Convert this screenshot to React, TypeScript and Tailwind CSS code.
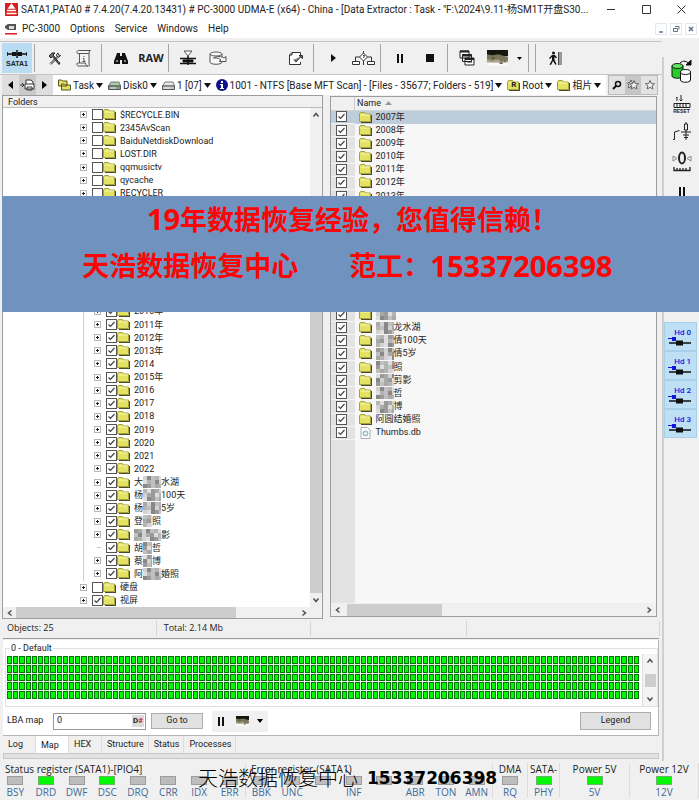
import type { ReactNode } from "react";
import { clsx } from "clsx";

const wide = "font-['Open_Sans','Noto_Sans_CJK_SC',sans-serif]";
const narrow = "font-['Roboto','Noto_Sans_CJK_SC',sans-serif]";

/* ---------- data ---------- */

interface Entry {
  name: string;
  level?: 1 | 2;
  checked?: boolean;
  leaf?: boolean;
  file?: boolean;
  // width of the pixelated part and the text that follows it
  mask?: number;
  tail?: string;
}

const hidden = (count: number, level: 1 | 2): Entry[] =>
  Array.from({ length: count }, () => ({ name: "", level, checked: true }));

const tree: Entry[] = [
  { name: "$RECYCLE.BIN", level: 1 },
  { name: "2345AvScan", level: 1 },
  { name: "BaiduNetdiskDownload", level: 1 },
  { name: "LOST.DIR", level: 1 },
  { name: "qqmusictv", level: 1 },
  { name: "qycache", level: 1 },
  { name: "RECYCLER", level: 1 },
  ...hidden(5, 1),
  ...hidden(3, 2),
  ...[
    "2010年",
    "2011年",
    "2012年",
    "2013年",
    "2014",
    "2015年",
    "2016",
    "2017",
    "2018",
    "2019",
    "2020",
    "2021",
    "2022",
  ].map((name): Entry => ({ name, level: 2, checked: true })),
  { name: "大", level: 2, checked: true, mask: 18, tail: "水湖" },
  { name: "杨", level: 2, checked: true, mask: 18, tail: "100天" },
  { name: "杨", level: 2, checked: true, mask: 18, tail: "5岁" },
  { name: "登", level: 2, checked: true, mask: 9, tail: "照" },
  { name: "", level: 2, checked: true, mask: 27, tail: "影" },
  { name: "胡", level: 2, checked: true, leaf: true, mask: 9, tail: "哲" },
  { name: "蔡", level: 2, checked: true, mask: 9, tail: "博" },
  { name: "阿", level: 2, checked: true, mask: 18, tail: "婚照" },
  { name: "硬盘", level: 1 },
  { name: "视屏", level: 1, checked: true },
];

const files: Entry[] = [
  { name: "2007年" },
  { name: "2008年" },
  { name: "2009年" },
  { name: "2010年" },
  { name: "2011年" },
  { name: "2012年" },
  { name: "2013年" },
  ...hidden(8, 1),
  { name: "", mask: 20 },
  { name: "", mask: 18, tail: "龙水湖" },
  { name: "", mask: 18, tail: "倩100天" },
  { name: "", mask: 18, tail: "倩5岁" },
  { name: "", mask: 18, tail: "照" },
  { name: "", mask: 18, tail: "剪影" },
  { name: "", mask: 18, tail: "哲" },
  { name: "", mask: 18, tail: "博" },
  { name: "阿圆结婚照" },
  { name: "Thumbs.db", file: true },
];

const registers = [
  {
    title: "Status register (SATA1)-[PIO4]",
    leds: ["BSY", "DRD", "DWF", "DSC", "DRQ", "CRR", "IDX", "ERR"],
    on: ["DRD", "DSC"],
  },
  {
    title: "Error register-(SATA1)",
    leds: ["BBK", "UNC", "", "INF", "", "ABR", "TON", "AMN"],
    on: [],
  },
  { title: "DMA", leds: ["RQ"], on: [] },
  { title: "SATA-", leds: ["PHY"], on: ["PHY"] },
  { title: "Power 5V", leds: ["5V"], on: ["5V"] },
  { title: "Power 12V", leds: ["12V"], on: ["12V"] },
];

/* ---------- small drawings ---------- */

function Folder() {
  return (
    <svg width="13" height="11" viewBox="0 0 13 11" className="shrink-0">
      <path d="M2 11h11V3h-1v7H2z" fill="#4a4a26" />
      <path d="M.5 9.500V2l1-1.500h4L6.500 2h5v7.500z" fill="#e4e262" stroke="#a3a23c" />
      <path d="M1.500 3h9" stroke="#f8f7b4" />
    </svg>
  );
}

function FileIcon() {
  return (
    <svg width="11" height="12" viewBox="0 0 11 12" className="shrink-0">
      <path d="M1 .5h6.500L10 3v8.500H1z" fill="#fff" stroke="#a8adb2" />
      <circle cx="5.500" cy="6.500" r="2.500" fill="#c5dce4" stroke="#8ba9b5" />
      <circle cx="5.500" cy="6.500" r="1" fill="#fff" />
    </svg>
  );
}

function Mosaic({ width, seed }: { width: number; seed: number }) {
  const tones = ["#d2d2d2", "#9a9a9a", "#b4b4b4", "#888888", "#a9a9a9", "#dedede", "#c0c0c0"];
  const cols = Math.ceil(width / 4);
  return (
    <svg width={width} height="12" viewBox={`0 0 ${width} 12`} className="shrink-0">
      {Array.from({ length: cols * 3 }, (_, i) => {
        const col = i % cols;
        const row = Math.floor(i / cols);
        return (
          <rect
            key={i}
            x={col * 4}
            y={row * 4}
            width="4"
            height="4"
            fill={tones[(col * 3 + row * 5 + col * row + seed * 2) % tones.length]}
          />
        );
      })}
    </svg>
  );
}

function Expander() {
  return (
    <svg width="7" height="7" viewBox="0 0 7 7" className="shrink-0">
      <rect x=".5" y=".5" width="6" height="6" fill="#fff" stroke="#b5b5b5" />
      <path d="M2 3.500h3M3.500 2v3" stroke="#222" />
    </svg>
  );
}

function Caret() {
  return (
    <svg width="7" height="5" viewBox="0 0 7 5" className="shrink-0">
      <path d="M0 0h7L3.500 5z" fill="#111" />
    </svg>
  );
}

function Arrow({ dir }: { dir: "up" | "down" | "left" | "right" }) {
  const paths = {
    up: "M1.500 5.500 4 2.500l2.500 3",
    down: "M1.500 2.500 4 5.500l2.500-3",
    left: "M5.500 1.500 2.500 4l3 2.500",
    right: "M2.500 1.500 5.500 4l-3 2.500",
  };
  return (
    <svg width="8" height="8" viewBox="0 0 8 8" className="shrink-0">
      <path d={paths[dir]} fill="none" stroke="#505050" strokeWidth="1.500" />
    </svg>
  );
}

function Check({ id, label, checked }: { id: string; label: string; checked?: boolean }) {
  return (
    <span className="grid shrink-0">
      <input
        id={id}
        type="checkbox"
        aria-label={label || "Folder"}
        defaultChecked={checked}
        className="peer col-start-1 row-start-1 size-[11px] appearance-none border border-[#555] bg-white"
      />
      <svg
        viewBox="0 0 11 11"
        className="pointer-events-none invisible col-start-1 row-start-1 size-[11px] peer-checked:visible"
      >
        <path d="M2.500 5.500 4.500 7.500 8.500 3" fill="none" stroke="#444" strokeWidth="1.200" />
      </svg>
    </span>
  );
}

function Pause() {
  return (
    <svg width="8" height="9" viewBox="0 0 8 9">
      <path d="M1 0h2v9H1zM5 0h2v9H5z" fill="#111" />
    </svg>
  );
}

function Landscape({ width }: { width: number }) {
  return (
    <svg width={width} height={width * 0.75} viewBox="0 0 20 15">
      <path d="M0 0h20v6H0z" fill="#15150f" />
      <path d="M0 4l5 1 6-1 9 3v5H0z" fill="#77745a" />
      <path d="M0 9h3v1h4v-1h5v2h3v-1h5v3H0z" fill="#aaa68a" />
      <path d="M0 12h20v3H0z" fill="#fafaf8" />
      <path d="M12 12h3v1h-3zM16 10h2v1h-2zM5 7h2v1H5z" fill="#3f3e30" />
    </svg>
  );
}

/* ---------- toolbar ---------- */

function Tool({ label, children }: { label: string; children: ReactNode }) {
  return (
    <button aria-label={label} className="flex h-[30px] w-[30px] shrink-0 items-center justify-center">
      {children}
    </button>
  );
}

function Sep() {
  return <div className="mx-[2px] h-[28px] w-[3px] shrink-0 border-l border-[#a5a5a5]" />;
}

function Toolbar() {
  return (
    <div className="flex items-center border-y border-[#c4c4c4] py-px pl-[2px]">
      <button className="flex h-[30px] w-[30px] shrink-0 flex-col items-center justify-center bg-[#b9dcf3]">
        <svg width="20" height="10" viewBox="0 0 20 10">
          <path d="M0 5h20M0 3v4M20 3v4" stroke="#111" strokeWidth="1.500" />
          <path d="M5 3h4v4H5zM11 3h4v4h-4z" fill="#111" />
          <path d="M10 1v8" stroke="#111" strokeWidth="1.500" />
        </svg>
        <span className="font-['Liberation_Sans',sans-serif] text-[7px] leading-[9px] font-bold">SATA1</span>
      </button>
      <Sep />
      <Tool label="Tools">
        <svg width="13" height="13" viewBox="0 0 13 13" fill="none" stroke="#222">
          <path d="M2 11.500 9 4.500M3 12.500l7-7" />
          <path d="M1 4l3-3h3L5 3l6 7.500 1 .5-1 1.500-6.500-8L3 6z" fill="#777" />
          <path d="M9 4.500 8.500 2.500 10 1l.3 2 2.200.4-1.500 1.800z" fill="#fff" />
        </svg>
      </Tool>
      <Tool label="Script">
        <svg width="18" height="18" viewBox="0 0 18 18" fill="#f5f5f5" stroke="#555">
          <path d="M4.500 14V4.500H14V14c0 2.500 1.500 3-.5 3H3.500c-2 0-2-3-1-3h8c0 2 1 3 2.500 3" />
          <path d="M14 4.500H3c-1.500 0-1.500-3 .5-3h12c-1.500 0-1.500 3-1.500 3z" />
          <path d="M9 7v1M8 9.500h1V12M7.500 12.500h3" fill="none" />
        </svg>
      </Tool>
      <Sep />
      <Tool label="Find">
        <svg width="14" height="13" viewBox="0 0 14 13" fill="#111">
          <path d="M3 1h3v3h2V1h3l1 3 2 5v3H8V8H6v4H0V9l2-5z" />
          <path d="M2 9h2M10 9h2" stroke="#fff" />
        </svg>
      </Tool>
      <Tool label="RAW">
        <span className="font-['Open_Sans',sans-serif] text-[11px] font-bold">RAW</span>
      </Tool>
      <Sep />
      <Tool label="Filter">
        <svg width="18" height="16" viewBox="0 0 18 16" fill="none" stroke="#111">
          <path d="M5 1h8L9 6z" fill="#fff" stroke="#555" />
          <path d="M9 6v9M1 8.500h16M1 13.500h16" strokeWidth="1.500" />
          <path d="M4 10h10v2H4z" fill="#111" />
        </svg>
      </Tool>
      <Tool label="Disk">
        <svg width="18" height="15" viewBox="0 0 18 15" fill="#f8f8f8" stroke="#555">
          <path d="M1 3v8c0 3 12 3 12 0V3" />
          <ellipse cx="7" cy="3" rx="6" ry="2" />
          <path d="M4.500 7c4-.5 6 .5 7.500 2l-2 1.500h7V5.500L15 7c-3-2-7-2-10.500 0z" />
        </svg>
      </Tool>
      <div className="w-[48px] shrink-0" />
      <Tool label="Export">
        <svg width="16" height="15" viewBox="0 0 16 15" fill="#fff" stroke="#333">
          <path d="M12.500 4V1.500H4L1.500 4v9.500h11V11M4 1.500V4H1.500" />
          <path d="M6 8.500 8 11l5-5.500M11 4.500h3.500v3z" fill="#888" />
        </svg>
      </Tool>
      <Sep />
      <Tool label="Start">
        <svg width="6" height="8" viewBox="0 0 6 8">
          <path d="M1 0l5 4-5 4z" fill="#111" />
        </svg>
      </Tool>
      <Tool label="Scheme">
        <svg width="23" height="15" viewBox="0 0 23 15" fill="#fff" stroke="#333">
          <path d="M11.500 0v2M3.500 11V6h4M19.500 11V6h-4M11.500 10v4" fill="none" />
          <path d="M11.500 2l4 4-4 4-4-4z" />
          <path d="M11 4.500h1.500L11.500 7" fill="none" />
          <path d="M.5 10.500h7v3h-7zM15.500 10.500h7v3h-7z" />
        </svg>
      </Tool>
      <Sep />
      <Tool label="Pause">
        <Pause />
      </Tool>
      <Tool label="Stop">
        <span className="size-2 bg-[#111]" />
      </Tool>
      <Sep />
      <Tool label="Windows">
        <svg width="16" height="16" viewBox="0 0 16 16" fill="#fff" stroke="#222">
          <path d="M1 1h9v7H1zM3.500 4.500h9v7h-9zM6 8h9v7H6z" />
          <path d="M1 1.500h9M3.500 5.500h9M6 9h9" strokeWidth="2" />
          <path d="M8 12h5" />
        </svg>
      </Tool>
      <Tool label="Map view">
        <Landscape width={21} />
      </Tool>
      <button aria-label="More views" className="flex h-[30px] w-[14px] shrink-0 items-center justify-center">
        <svg width="5" height="3" viewBox="0 0 5 3">
          <path d="M0 0h5L2.500 3z" />
        </svg>
      </button>
      <Sep />
      <Sep />
      <Tool label="Exit">
        <svg width="15" height="15" viewBox="0 0 15 15" fill="#111">
          <circle cx="5.500" cy="2" r="1.500" />
          <path d="M4 4h3l2 2.500-1 .8L6.500 6v3l2 4-1 1L5 10l-2 4-1.500-.5L4 9V6L2 8 1 7z" />
          <path d="M10 1h1v13h-1z" fill="#444" />
          <path d="M11 1h3v13h-3z" fill="#999" />
        </svg>
      </Tool>
    </div>
  );
}

function Crumb({ icon, text }: { icon: ReactNode; text: string }) {
  return (
    <button className="flex shrink-0 items-center gap-[2px] whitespace-nowrap">
      {icon}
      <span>{text}</span>
      <Caret />
    </button>
  );
}

function DiskIcon({ green }: { green?: boolean }) {
  return (
    <svg width="13" height="11" viewBox="0 0 13 11">
      <path d="M3 2h8l1.500 4H.5z" fill={green ? "#a9c9a9" : "#e8e8e8"} stroke="#777" />
      <path d="M.5 6h12v3.500H.5z" fill={green ? "#7ba47b" : "#c8c8c8"} stroke="#555" />
      <path d="M2 8h6" stroke="#eee" />
    </svg>
  );
}

function PathBar() {
  return (
    <nav className={clsx(narrow, "flex h-[20px] items-center text-[10px]")}>
      <div className="ml-[2px] flex h-[20px] w-[51px] shrink-0 items-center bg-[#dedede]">
        <button aria-label="Back" className="flex flex-1 justify-center">
          <svg width="5" height="8" viewBox="0 0 5 8">
            <path d="M5 0v8L0 4z" />
          </svg>
        </button>
        <button aria-label="Go to item" className="flex h-full flex-1 items-center justify-center bg-[#c9c9c9]">
          <svg width="15" height="12" viewBox="0 0 15 12" fill="#fff" stroke="#333">
            <path d="M0 6h3M2 4l2 2-2 2" fill="none" />
            <path d="M6 5V1h5l2 2v2M5 5h9v5H5zM7 11V8h5v3z" />
          </svg>
        </button>
        <button aria-label="Forward" className="flex flex-1 justify-center">
          <svg width="5" height="8" viewBox="0 0 5 8">
            <path d="M0 0v8l5-4z" />
          </svg>
        </button>
      </div>
      <div className="flex h-[20px] min-w-0 flex-1 items-center gap-[5px] overflow-hidden bg-white pl-[5px]">
        <Crumb
          icon={
            <svg width="13" height="12" viewBox="0 0 13 12" fill="#e4e262" stroke="#55551c">
              <path d="M.5 7V1h3l1 1H9v5zM3.500 11V5h3l1 1h5v5z" />
            </svg>
          }
          text="Task"
        />
        <Crumb icon={<DiskIcon green />} text="Disk0" />
        <Crumb icon={<DiskIcon />} text="1 [07]" />
        <Crumb
          icon={
            <svg width="12" height="12" viewBox="0 0 12 12">
              <circle cx="6" cy="6" r="6" fill="#10108c" />
              <path d="M5 2h2v2H5zM4 5h3v4h1v1H4V9h1V6H4z" fill="#fff" />
            </svg>
          }
          text="1001 - NTFS [Base MFT Scan] - [Files - 35677; Folders - 519]"
        />
        <Crumb
          icon={
            <span className="grid place-items-center">
              <span className="col-start-1 row-start-1">
                <Folder />
              </span>
              <span className="col-start-1 row-start-1 text-[8px] leading-none font-bold">R</span>
            </span>
          }
          text="Root"
        />
        <Crumb icon={<Folder />} text="相片" />
      </div>
      <div className="mr-1 ml-[2px] flex shrink-0 border border-[#bbb]">
        <button aria-label="Search" className="flex h-[18px] w-4 items-center justify-center bg-[#e2e2e2]">
          <svg width="10" height="10" viewBox="0 0 10 10" fill="none" stroke="#111">
            <circle cx="6" cy="4" r="2.500" strokeWidth="1.500" />
            <path d="M4 6 1 9" strokeWidth="2" />
          </svg>
        </button>
        {["#c6c6c6", "#e2e2e2"].map((tone, i) => (
          <button
            key={tone}
            aria-label={i ? "Bookmark" : "Bookmarks"}
            className="flex h-[18px] w-4 items-center justify-center"
            style={{ backgroundColor: tone }}
          >
            <svg width="13" height="12" viewBox="0 0 13 12" fill="#eee" stroke="#666">
              {i === 0 && <path d="M4 1l1 2.500 3 .3-2 2 .5 3L4 7.500 1.500 9 2 6 .5 4 3 3.500z" />}
              <path d="M7 1.500l1.300 3 3.200.3-2.400 2.100.8 3.100L7 8.400 4.100 10l.8-3.100-2.400-2.100 3.200-.3z" />
            </svg>
          </button>
        ))}
      </div>
    </nav>
  );
}

/* ---------- panes ---------- */

function EntryName({ entry, seed }: { entry: Entry; seed: number }) {
  return (
    <span className="flex items-center whitespace-nowrap">
      {entry.name}
      {entry.mask && <Mosaic width={entry.mask} seed={seed} />}
      {entry.tail}
    </span>
  );
}

function FolderPane() {
  return (
    <section className="flex min-w-0 flex-[320] flex-col border border-[#9d9d9d] bg-white">
      <h2 className="h-[12px] border-b border-[#bdbdbd] bg-[#f0f0f0] pl-[5px] leading-[12px]">Folders</h2>
      <div className="flex flex-1">
        <ul className="flex flex-1 flex-col pl-[77px] leading-[12px]">
          {tree.map((entry, i) => (
            <li
              key={i}
              className={clsx(
                "flex flex-1 items-center",
                entry.level === 2 && "ml-[3px] border-l border-[#cfcfcf] pl-[10px]",
              )}
            >
              {entry.leaf ? <span className="ml-[3px] w-1 border-t border-[#ccc]" /> : <Expander />}
              <span className="w-[5px]" />
              <Check id={`tree-${i}`} label={entry.name} checked={entry.checked} />
              <label htmlFor={`tree-${i}`} className="flex items-center gap-[4px]">
                <Folder />
                <EntryName entry={entry} seed={i} />
              </label>
            </li>
          ))}
        </ul>
        <div className="flex w-[12px] flex-col items-center bg-[#f0f0f0] py-[3px]">
          <Arrow dir="up" />
          <div className="mt-[77px] mb-[3px] w-full flex-1 bg-[#cdcdcd]" />
          <Arrow dir="down" />
        </div>
      </div>
      <div className="flex h-[11px] items-center bg-[#f0f0f0] pr-[14px] pl-[3px]">
        <Arrow dir="left" />
        <div className="ml-[2px] h-full w-[73%] bg-[#cdcdcd]" />
        <span className="flex-1" />
        <Arrow dir="right" />
      </div>
    </section>
  );
}

function FilePane() {
  return (
    <section className="mt-px mb-[2px] flex min-w-0 flex-[327] flex-col border border-[#9d9d9d] bg-[#f7f7f7]">
      <table className="h-[343px] w-full border-collapse">
        <thead>
          <tr className="h-[13px] border-b border-[#d5d5d5] bg-[#f0f0f0]">
            <th className="w-[24px] border-r border-[#ccc]" aria-label="Selected" />
            <th className="p-0 pl-[2px] text-left leading-[12px] font-normal">
              <span className="flex items-center gap-1">
                Name
                <svg width="7" height="4" viewBox="0 0 7 4">
                  <path d="M0 4h7L3.500 0z" fill="#999" />
                </svg>
              </span>
            </th>
          </tr>
        </thead>
        <tbody>
          {files.map((entry, i) => (
            <tr key={i} className={clsx(i === 0 && "bg-[#becddb]")}>
              <td className={clsx("border-b border-[#f4f4f4] p-0 pl-[5px]", i > 0 && "bg-[#e3e3e3]")}>
                <Check id={`file-${i}`} label={entry.name} checked />
              </td>
              <td className="p-0 pl-[4px]">
                <label htmlFor={`file-${i}`} className="flex h-[13px] items-center gap-[4px] leading-[13px]">
                  <span className="flex w-[13px] justify-center">{entry.file ? <FileIcon /> : <Folder />}</span>
                  <EntryName entry={entry} seed={i} />
                </label>
              </td>
            </tr>
          ))}
        </tbody>
      </table>
      <div className="w-[24px] flex-1 bg-[#e3e3e3]" />
      <div className="flex h-[13px] items-center bg-[#f0f0f0] px-[3px]">
        <Arrow dir="left" />
        <div className="ml-[5px] h-[12px] w-[30%] bg-[#cdcdcd]" />
        <span className="flex-1" />
        <Arrow dir="right" />
      </div>
    </section>
  );
}

function MapPanel() {
  return (
    <section className={clsx(narrow, "mx-[3px] border-t border-[#9a9a9a] pt-px text-[9px]")}>
      <div className="border-r border-b border-[#b5b5b5] bg-white pt-[3px]">
        <fieldset className="ml-[2px] border border-[#e0e0e0]">
          <legend className="ml-[4px] px-px leading-[11px]">0 - Default</legend>
          <div className="flex">
            <div className="mt-[2px] mr-[3px] mb-[7px] ml-px grid h-[43px] min-w-0 flex-1 grid-cols-[repeat(102,minmax(0,1fr))] grid-rows-5 gap-px bg-[#dff5df]">
              {Array.from({ length: 510 }, (_, i) => (
                <span key={i} className="border border-[#087308] bg-[#00fb00]" />
              ))}
            </div>
            <div className="flex w-[15px] flex-col items-center border-l border-[#ddd] bg-[#f4f4f4] py-[3px]">
              <Arrow dir="up" />
              <div className="my-auto h-[13px] w-[11px] bg-[#cdcdcd]" />
              <Arrow dir="down" />
            </div>
          </div>
        </fieldset>
        <div className="flex h-[28px] items-center pl-[4px]">
          <label htmlFor="lba" className="w-[46px]">
            LBA map
          </label>
          <div className="flex h-[17px] w-[93px] items-center border border-[#999] bg-white">
            <input id="lba" defaultValue="0" className="min-w-0 flex-1 pl-[3px] outline-none" />
            <button className="mr-px h-[12px] bg-[#dcdcdc] px-px text-[8px] leading-[12px] font-bold">
              D<span className="text-[#d02020]">#</span>
            </button>
          </div>
          <button className="ml-[5px] h-[16px] w-[52px] border border-[#adadad] bg-[#e1e1e1]">Go to</button>
          <div className="ml-[9px] flex h-[21px] items-center gap-[11px] bg-[#f0f0f0] px-[5px]">
            <button aria-label="Pause map">
              <Pause />
            </button>
            <button aria-label="Map colours">
              <Landscape width={13} />
            </button>
            <button aria-label="Map menu" className="-ml-[3px]">
              <svg width="6" height="4" viewBox="0 0 6 4">
                <path d="M0 0h6L3 4z" />
              </svg>
            </button>
          </div>
          <button className="mr-[7px] ml-auto h-[18px] w-[71px] border border-[#adadad] bg-[#e1e1e1]">Legend</button>
        </div>
      </div>
      <div className="flex h-[17px]" role="tablist">
        {["Log", "Map", "HEX", "Structure", "Status", "Processes"].map((tab, i) => (
          <button
            key={tab}
            role="tab"
            aria-selected={tab === "Map"}
            className={clsx(
              "border-r border-[#ddd] pr-[4px] pl-[5px]",
              tab === "Map" && "bg-white pt-[2px]",
              i < 3 && "w-[33px] text-left",
            )}
          >
            {tab}
          </button>
        ))}
      </div>
      <div className="h-[6px] border border-[#c8c8c8] bg-[#e2e2e2]" />
    </section>
  );
}

/* ---------- right-hand tools ---------- */

function SideBar() {
  return (
    <aside className="mt-[16px] flex w-[37px] shrink-0 flex-col items-center border-l-2 border-[#cfcfcf]">
      <Tool label="Copy disk">
        <svg width="22" height="24" viewBox="0 0 22 24" stroke="#111">
          <path d="M1 6v10c0 3 11 3 11 0V6" fill="#27cc27" />
          <ellipse cx="6.500" cy="6" rx="5.500" ry="2.500" fill="#5be65b" />
          <path d="M9.500 12v8c0 3 10 3 10 0v-8" fill="#fff" />
          <ellipse cx="14.500" cy="12" rx="5" ry="2.500" fill="#fff" />
          <path d="M9 3c3-3 7-2 9 1" fill="none" />
          <path d="M15 5h5V0z" fill="#111" />
        </svg>
      </Tool>
      <Tool label="Reset">
        <svg width="18" height="14" viewBox="0 0 18 14" fill="none" stroke="#222">
          <path d="M3 3l1-1v4M8 0v6M6.500 4.500 8 6l1.500-1.500" />
          <path d="M1 8.500h16v4H1zM4 8.500v4M7 8.500v4M10 8.500v4M13 8.500v4" />
        </svg>
      </Tool>
      <span className="-mt-[10px] h-[9px] text-center font-['Liberation_Sans',sans-serif] text-[5px] leading-[8px] font-bold">
        RESET
      </span>
      <Tool label="Relay">
        <svg width="20" height="19" viewBox="0 0 20 19" fill="none" stroke="#222">
          <path d="M1 17.500h1.500V10l5-1.500M9 10h10M11 13h6M12 15.500h4" />
          <path d="M14 0v2M14 8v10" />
          <path d="M12.500 2h3v6h-3z" />
        </svg>
      </Tool>
      <Tool label="Zero">
        <svg width="20" height="21" viewBox="0 0 20 21" fill="none" stroke="#222">
          <ellipse cx="10" cy="7" rx="3" ry="5.500" strokeWidth="2" />
          <path d="M1 5v5l4-2.500zM19 5v5l-4-2.500z" stroke="#888" />
          <path d="M2 16v3.500h16V16M5 17v2M8 17v2M11 17v2M14 17v2" strokeWidth="1.300" />
        </svg>
      </Tool>
      <Tool label="Pause task">
        <Pause />
      </Tool>
      <div className="mt-[116px] w-full">
        {["Hd 0", "Hd 1", "Hd 2", "Hd 3"].map((head) => (
          <button
            key={head}
            className="flex h-[29px] w-[33px] flex-col items-end justify-center border border-[#a9d0ea] bg-[#bfdff4] pr-[5px]"
          >
            <span className="font-['Roboto',sans-serif] text-[8px] leading-[9px] font-medium text-[#1515e0]">
              {head}
            </span>
            <svg width="24" height="9" viewBox="0 0 24 9">
              <path d="M1 1.500h5" stroke="#1515e0" />
              <path d="M5 0h4v4H5z" fill="#1515e0" />
              <path d="M2 6h22" stroke="#111" strokeWidth="1.500" />
              <path d="M9 3.500h7v5H9z" fill="#111" />
            </svg>
          </button>
        ))}
      </div>
    </aside>
  );
}

function Registers() {
  return (
    <footer
      className={clsx(
        wide,
        "grid grid-cols-[246fr_247fr_35fr_32fr_70fr_69fr] bg-[#f0f0f0] pt-[2px] pb-[2px] text-[10px] leading-[12px]",
      )}
    >
      {registers.map((group) => (
        <section key={group.title} className="min-w-0 border-r border-[#dcdcdc]">
          <h3 className={clsx("whitespace-nowrap", group.leds.length > 1 ? "pl-[5px]" : "flex justify-center")}>
            {group.title}
          </h3>
          <div className="flex justify-around">
            {group.leds.map((led, i) => (
              <div key={i} className="flex w-[30px] flex-col items-center">
                <span
                  className={clsx(
                    "mt-px h-[9px] w-[16px] border",
                    group.on.some((name) => name === led)
                      ? "border-[#6ab56a] bg-[#00f800]"
                      : "border-[#9c9c9c] bg-[#bdbdbd]",
                  )}
                />
                <span className="mt-px text-[#3f6a98]">{led}</span>
              </div>
            ))}
          </div>
        </section>
      ))}
    </footer>
  );
}

export default function App() {
  return (
    <div className="relative flex min-h-screen flex-col overflow-hidden bg-[#f0f0f0] text-[#222]">
      <header className={clsx(narrow, "bg-white text-[10px] text-[#222]")}>
        <div className="flex h-[19px] items-center pl-[5px]">
          <svg width="13" height="13" viewBox="0 0 13 13" className="shrink-0">
            <path d="M0 0h13v13H0z" fill="#d9201c" />
            <path d="M6.500 1.500 9 5H4zM2 7.500h9M1.500 10.500h10" fill="#fff" stroke="#fff" strokeWidth="1.500" />
          </svg>
          <h1 className="ml-[3px] min-w-0 flex-1 overflow-hidden text-ellipsis whitespace-nowrap">
            SATA1,PATA0 # 7.4.20(7.4.20.13431) # PC-3000 UDMA-E (x64) - China - [Data Extractor : Task -
            "F:\2024\9.11-杨SM1T开盘S30...
          </h1>
          <div className="flex w-[105px] shrink-0 justify-around">
            <button aria-label="Minimize">
              <svg width="9" height="9" viewBox="0 0 9 9" stroke="#333" fill="none">
                <path d="M0 4.500h8" />
              </svg>
            </button>
            <button aria-label="Maximize">
              <svg width="9" height="9" viewBox="0 0 9 9" stroke="#333" fill="none">
                <path d="M.5 .5h8v8h-8z" />
              </svg>
            </button>
            <button aria-label="Close">
              <svg width="9" height="9" viewBox="0 0 9 9" stroke="#333" fill="none">
                <path d="M.5 .5l8 8M8.500 .5l-8 8" />
              </svg>
            </button>
          </div>
        </div>
        <div className="flex h-[19px] items-center pl-[5px]">
          <svg width="12" height="12" viewBox="0 0 12 12">
            <path d="M0 3l3-2h8v6H3L0 5z" fill="#555" />
            <path d="M4 3h5v3H4z" fill="#ddd" />
            <path d="M0 10h12v1.500H0z" fill="#d9201c" />
          </svg>
          <nav className="ml-[5px] flex gap-[10px]">
            {["PC-3000", "Options", "Service", "Windows", "Help"].map((item) => (
              <button key={item}>{item}</button>
            ))}
          </nav>
          <div className="ml-auto flex gap-[3px] pr-[2px]">
            {["M3 8h4", "M4 2.500h4v3M2.500 4.500h4v3h-4z", "M3 3l4 4M7 3 3 7"].map((d, i) => (
              <button
                key={d}
                aria-label={["Minimize child", "Restore child", "Close child"][i]}
                className="border border-[#e4e8ee] bg-white"
              >
                <svg width="10" height="10" viewBox="0 0 10 10" fill="none" stroke="#5b7590">
                  <path d={d} strokeWidth={i === 1 ? 1 : 1.5} />
                </svg>
              </button>
            ))}
          </div>
        </div>
      </header>

      <div className="mt-[3px] flex flex-1">
        <main className="flex min-w-0 flex-1 flex-col">
          <Toolbar />
          <PathBar />
          <div className={clsx(narrow, "flex flex-1 gap-[7px] pr-[5px] pl-[2px] text-[9px]")}>
            <FolderPane />
            <FilePane />
          </div>
          <div
            className={clsx(
              wide,
              "mx-[2px] my-[2px] grid h-[15px] grid-cols-[154fr_154fr_155fr_192fr] text-[9px] leading-[14px]",
            )}
          >
            <span className="border-r border-[#d5d5d5] pl-[5px]">Objects: 25</span>
            <span className="border-r border-[#d5d5d5] pl-[7px]">Total: 2.14 Mb</span>
            <span className="border-r border-[#d5d5d5]" />
            <span className="border-r border-[#d5d5d5]" />
          </div>
          <MapPanel />
          <div className="h-[2px]" />
        </main>
        <SideBar />
      </div>

      <Registers />

      {/* Contact banner over the panes */}
      <div className="absolute top-[196px] right-0 left-[2px] h-[116px] bg-[#6f92bf] pr-[6px] text-center font-['Open_Sans','Noto_Sans_CJK_SC',sans-serif] text-[27px] leading-[46px] font-bold whitespace-pre text-[#fb0505]">
        <p className="pl-[10px]">
          <span className="text-[29px]">19</span>年数据恢复经验，您值得信赖！
        </p>
        <p className="flex justify-center">
          天浩数据恢复中心
          <span className="w-[51px]" />
          范工：<span className="text-[29px]">15337206398</span>
        </p>
      </div>

      <p className="absolute bottom-[8px] left-[198px] flex items-center gap-[9px] font-['Noto_Sans_CJK_SC',sans-serif] text-[20px] leading-[28px] font-light whitespace-nowrap text-black">
        天浩数据恢复中心
        <span className="font-['DejaVu_Sans',sans-serif] text-[17px] font-bold">15337206398</span>
      </p>
    </div>
  );
}
